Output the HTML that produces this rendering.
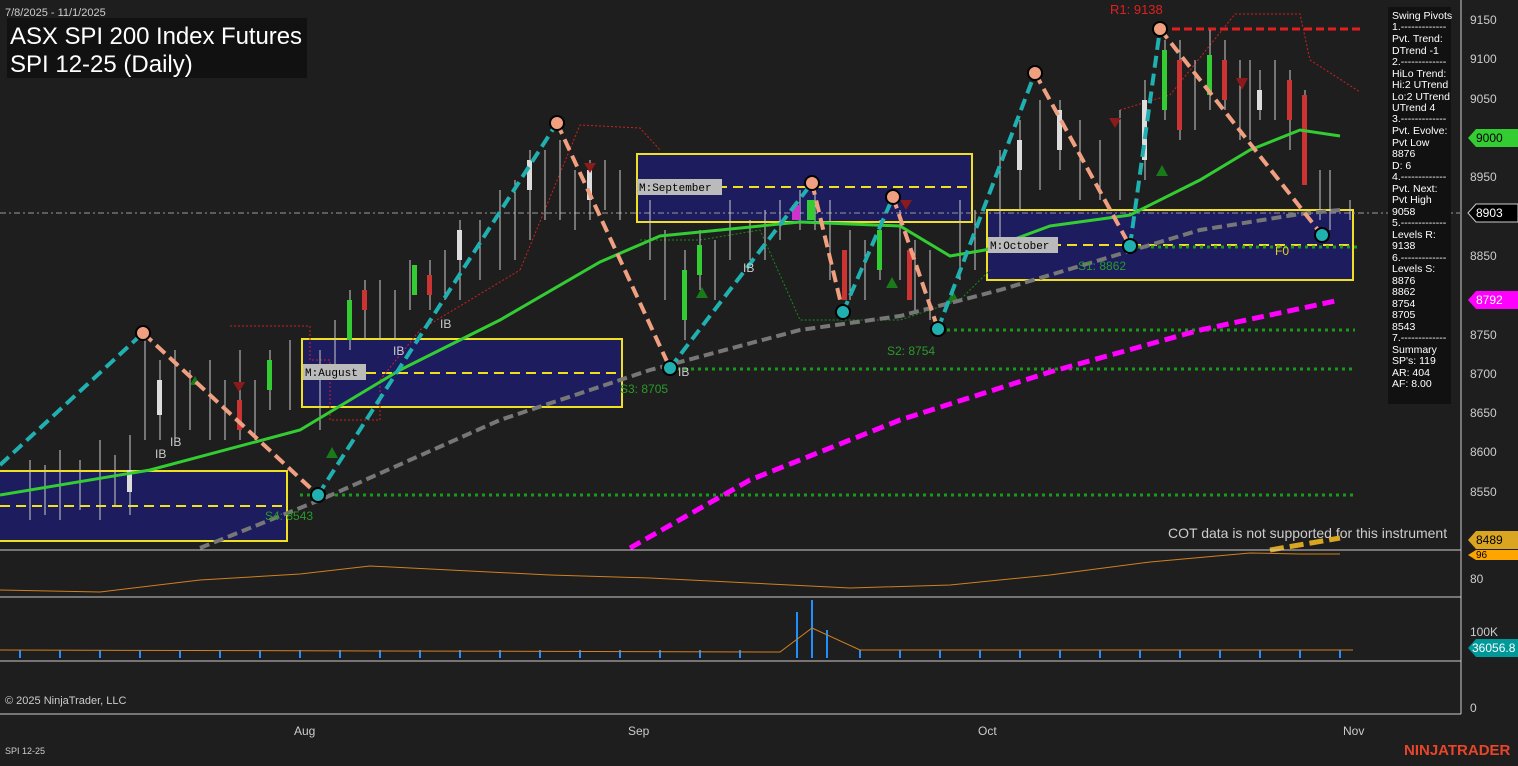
<!DOCTYPE html><html><head><style>
body{margin:0;background:#1e1e1e;width:1518px;height:761px;overflow:hidden;font-family:"Liberation Sans",sans-serif}
</style></head><body>
<svg width="1518" height="761" xmlns="http://www.w3.org/2000/svg" font-family="Liberation Sans, sans-serif">
<rect width="1518" height="761" fill="#1e1e1e"/>
<g fill="#1c1c5e" stroke="#f0e020" stroke-width="2">
<rect x="-2" y="471" width="289" height="70"/>
<rect x="302" y="339" width="320" height="68"/>
<rect x="637" y="154" width="335" height="68"/>
<rect x="987" y="210" width="366" height="70"/>
</g>
<g stroke="#f0e020" stroke-width="2" stroke-dasharray="10,6">
<line x1="0" y1="506" x2="287" y2="506"/><line x1="302" y1="373" x2="622" y2="373"/>
<line x1="637" y1="187" x2="972" y2="187"/><line x1="987" y1="245" x2="1353" y2="245"/>
</g>
<line x1="0" y1="213" x2="1460" y2="213" stroke="#999" stroke-dasharray="6,3,2,3"/>
<g stroke="#1a9a1a" stroke-width="3" stroke-dasharray="3,4">
<line x1="300" y1="495" x2="1355" y2="495"/><line x1="670" y1="369" x2="1355" y2="369"/>
<line x1="940" y1="330" x2="1355" y2="330"/><line x1="1130" y1="247" x2="1360" y2="247"/>
</g>
<line x1="1160" y1="29" x2="1360" y2="29" stroke="#e02020" stroke-width="3" stroke-dasharray="8,4"/>
<polyline points="520,270 580,125 640,128 660,150" fill="none" stroke="#d02020" stroke-dasharray="2,2"/>
<polyline points="1120,110 1170,95 1235,14 1300,14 1310,60 1360,92" fill="none" stroke="#d02020" stroke-dasharray="2,2"/>
<polyline points="230,326 310,326 310,360 330,360 330,420 380,420 380,380 420,330 470,300 520,270" fill="none" stroke="#d02020" stroke-dasharray="2,2"/>
<polyline points="640,240 700,240 760,230 800,320 900,320 960,300 990,270" fill="none" stroke="#1a8a1a" stroke-dasharray="2,2"/>
<g stroke="#ccc" stroke-width="1">
<path d="M30,460v60M45,465v50M60,450v70M80,460v50M100,440v80M115,455v50M130,435v80M145,330v110M160,360v80M175,350v90M190,370v60M210,360v80M225,380v60M240,350v90M255,380v60M270,350v60M290,340v70M320,350v80M335,320v60M350,290v60M365,280v60M380,280v60M395,290v50M410,260v50M430,260v50M445,250v50M460,220v80M480,220v60M500,190v80M515,180v80M530,150v90M545,150v70M560,140v80M575,170v60M590,160v60M605,160v50M620,170v50M650,200v60M665,230v70M685,250v90M700,230v60M715,240v60M730,200v60M750,220v40M765,210v50M780,200v40M800,190v40M815,190v40M830,200v80M850,230v70M865,240v60M880,220v60M900,210v70M915,240v70M930,250v70M960,200v80M975,210v60M1000,150v90M1020,120v90M1040,100v90M1060,100v70M1080,120v80M1100,140v60M1120,110v90M1145,80v100M1165,40v80M1180,40v100M1195,60v70M1210,30v80M1225,40v70M1240,60v80M1250,60v80M1260,70v50M1275,60v60M1290,70v80M1305,90v60M1320,170v50M1330,170v60M1350,200v20"/>
</g>
<g stroke="none">
<rect x="127" y="470" width="5" height="22" fill="#ddd"/><rect x="157" y="380" width="5" height="35" fill="#ddd"/><rect x="237" y="400" width="5" height="30" fill="#c33"/>
<rect x="267" y="360" width="5" height="30" fill="#3c3"/><rect x="347" y="300" width="5" height="40" fill="#3c3"/><rect x="362" y="290" width="5" height="20" fill="#c33"/>
<rect x="412" y="265" width="5" height="30" fill="#3c3"/><rect x="427" y="275" width="5" height="20" fill="#c33"/><rect x="457" y="230" width="5" height="30" fill="#ddd"/>
<rect x="527" y="160" width="5" height="30" fill="#ddd"/><rect x="587" y="170" width="5" height="30" fill="#ddd"/><rect x="682" y="270" width="5" height="50" fill="#3c3"/>
<rect x="697" y="245" width="5" height="30" fill="#3c3"/><rect x="792" y="205" width="8" height="15" fill="#c3c"/><rect x="807" y="200" width="8" height="20" fill="#3c3"/>
<rect x="842" y="250" width="5" height="50" fill="#c33"/><rect x="877" y="230" width="5" height="40" fill="#3c3"/><rect x="907" y="250" width="5" height="50" fill="#c33"/>
<rect x="1017" y="140" width="5" height="30" fill="#ddd"/><rect x="1057" y="110" width="5" height="40" fill="#ddd"/><rect x="1142" y="100" width="5" height="60" fill="#ddd"/>
<rect x="1162" y="50" width="5" height="60" fill="#3c3"/><rect x="1177" y="60" width="5" height="70" fill="#c33"/><rect x="1207" y="55" width="5" height="40" fill="#3c3"/>
<rect x="1222" y="60" width="5" height="40" fill="#c33"/><rect x="1257" y="90" width="5" height="20" fill="#ddd"/><rect x="1287" y="80" width="5" height="40" fill="#c33"/><rect x="1302" y="95" width="5" height="90" fill="#c33"/>
</g>
<g fill="#1a7a1a"><path d="M190,385l5,-9l5,9z M326,458l6,-11l6,11z M696,298l6,-11l6,11z M886,288l6,-11l6,11z M947,302l6,-11l6,11z M1156,176l6,-11l6,11z"/></g>
<g fill="#8b1a1a"><path d="M233,382l6,10l6,-10z M584,163l6,10l6,-10z M1109,118l6,10l6,-10z M1236,78l6,12l6,-12z M900,200l6,10l6,-10z"/></g>
<polyline points="0,495 150,470 300,430 400,370 500,320 600,262 660,236 800,222 900,226 950,256 985,250 1050,226 1130,215 1200,180 1250,150 1300,130 1340,136" fill="none" stroke="#3c3" stroke-width="3"/>
<polyline points="200,548 320,500 500,420 650,370 800,330 900,316 1000,290 1100,260 1200,230 1300,214 1340,210" fill="none" stroke="#777" stroke-width="4" stroke-dasharray="10,5"/>
<polyline points="630,548 750,480 900,420 1050,372 1200,330 1340,300" fill="none" stroke="#f0f" stroke-width="5" stroke-dasharray="12,6"/>
<g stroke-width="4" stroke-dasharray="12,6" fill="none">
<polyline points="0,465 143,333" stroke="#20b0b0"/><polyline points="143,333 318,495" stroke="#f0a080"/>
<polyline points="318,495 557,123" stroke="#20b0b0"/><polyline points="557,123 670,368" stroke="#f0a080"/>
<polyline points="670,368 812,183" stroke="#20b0b0"/><polyline points="812,183 843,312" stroke="#f0a080"/>
<polyline points="843,312 893,197" stroke="#20b0b0"/><polyline points="893,197 938,329" stroke="#f0a080"/>
<polyline points="938,329 1035,73" stroke="#20b0b0"/><polyline points="1035,73 1130,246" stroke="#f0a080"/>
<polyline points="1130,246 1160,29" stroke="#20b0b0"/><polyline points="1160,29 1322,235" stroke="#f0a080"/>
</g>
<g fill="#f0a080" stroke="#000" stroke-width="2">
<circle cx="143" cy="333" r="7"/><circle cx="557" cy="123" r="7"/><circle cx="812" cy="183" r="7"/><circle cx="893" cy="197" r="7"/><circle cx="1035" cy="73" r="7"/><circle cx="1160" cy="29" r="7"/></g>
<g fill="#20b0b0" stroke="#000" stroke-width="2">
<circle cx="318" cy="495" r="7"/><circle cx="670" cy="368" r="7"/><circle cx="843" cy="312" r="7"/><circle cx="938" cy="329" r="7"/><circle cx="1130" cy="246" r="7"/><circle cx="1322" cy="235" r="7"/></g>
<g font-size="12" fill="#2a9a2a"><text x="265" y="520">S4: 8543</text><text x="620" y="393">S3: 8705</text><text x="887" y="355">S2: 8754</text><text x="1078" y="270">S1: 8862</text></g>
<text x="1110" y="14" font-size="13" fill="#e02020">R1: 9138</text>
<g font-size="12" fill="#ccc"><text x="155" y="458">IB</text><text x="170" y="446">IB</text><text x="393" y="355">IB</text><text x="440" y="328">IB</text><text x="678" y="376">IB</text><text x="743" y="272">IB</text><text x="1275" y="255" fill="#e0d020">F0</text></g>
<g font-size="11" fill="#000" font-family="Liberation Mono,monospace">
<rect x="303" y="364" width="63" height="16" fill="#bbb"/><text x="305" y="376">M:August</text>
<rect x="637" y="179" width="85" height="16" fill="#bbb"/><text x="639" y="191">M:September</text>
<rect x="988" y="237" width="70" height="16" fill="#bbb"/><text x="990" y="249">M:October</text>
</g>
<text x="1168" y="538" font-size="14" fill="#ccc">COT data is not supported for this instrument</text>
<polyline points="1270,550 1340,538" stroke="#daa520" stroke-width="5" stroke-dasharray="14,6"/>
<text x="5" y="16" font-size="11" fill="#ccc">7/8/2025 - 11/1/2025</text>
<rect x="7" y="18" width="300" height="60" fill="#111"/>
<text x="10" y="44" font-size="24" fill="#fff" textLength="292">ASX SPI 200 Index Futures</text>
<text x="10" y="72" font-size="24" fill="#fff">SPI 12-25 (Daily)</text>
<rect x="1388" y="7" width="63" height="397" fill="#111"/>
<g font-size="10.5" fill="#fff">
<text x="1392" y="19">Swing Pivots</text><text x="1392" y="30">1.-------------</text><text x="1392" y="42">Pvt. Trend:</text><text x="1392" y="54">DTrend -1</text><text x="1392" y="65">2.-------------</text><text x="1392" y="77">HiLo Trend:</text><text x="1392" y="88">Hi:2 UTrend</text><text x="1392" y="100">Lo:2 UTrend</text><text x="1392" y="111">UTrend 4</text><text x="1392" y="122">3.-------------</text><text x="1392" y="134">Pvt. Evolve:</text><text x="1392" y="146">Pvt Low</text><text x="1392" y="157">8876</text><text x="1392" y="169">D: 6</text><text x="1392" y="180">4.-------------</text><text x="1392" y="192">Pvt. Next:</text><text x="1392" y="203">Pvt High</text><text x="1392" y="215">9058</text><text x="1392" y="226">5.-------------</text><text x="1392" y="238">Levels R:</text><text x="1392" y="249">9138</text><text x="1392" y="261">6.-------------</text><text x="1392" y="272">Levels S:</text><text x="1392" y="284">8876</text><text x="1392" y="295">8862</text><text x="1392" y="307">8754</text><text x="1392" y="318">8705</text><text x="1392" y="330">8543</text><text x="1392" y="341">7.-------------</text><text x="1392" y="353">Summary</text><text x="1392" y="364">SP's: 119</text><text x="1392" y="376">AR: 404</text><text x="1392" y="387">AF: 8.00</text>
</g>
<line x1="1461" y1="0" x2="1461" y2="714" stroke="#ccc"/>
<g stroke="#ccc"><line x1="0" y1="550" x2="1461" y2="550"/><line x1="0" y1="597" x2="1461" y2="597"/><line x1="0" y1="661" x2="1461" y2="661"/><line x1="0" y1="714" x2="1461" y2="714"/></g>
<g font-size="12" fill="#ccc">
<text x="1470" y="24">9150</text><text x="1470" y="63">9100</text><text x="1470" y="103">9050</text><text x="1470" y="181">8950</text><text x="1470" y="260">8850</text><text x="1470" y="339">8750</text><text x="1470" y="378">8700</text><text x="1470" y="417">8650</text><text x="1470" y="456">8600</text><text x="1470" y="496">8550</text>
<text x="1470" y="583">80</text><text x="1470" y="636">100K</text><text x="1470" y="712">0</text>
<text x="294" y="735">Aug</text><text x="628" y="735">Sep</text><text x="978" y="735">Oct</text><text x="1343" y="735">Nov</text>
<text x="5" y="704" font-size="11">© 2025 NinjaTrader, LLC</text></g>
<text x="5" y="754" font-size="9" fill="#ccc">SPI 12-25</text>
<text x="1404" y="755" font-size="15" font-weight="bold" fill="#e8452a">NINJATRADER</text>
<g font-size="12">
<path d="M1468,138l8,-9h42v18h-42z" fill="#3c3"/><text x="1476" y="142" fill="#000">9000</text>
<path d="M1468,213l8,-9h42v18h-42z" fill="#000" stroke="#ccc"/><text x="1476" y="217" fill="#fff">8903</text>
<path d="M1468,300l8,-9h42v18h-42z" fill="#f0f"/><text x="1476" y="304" fill="#fff">8792</text>
<path d="M1468,540l8,-9h42v18h-42z" fill="#daa520"/><text x="1476" y="544" fill="#000">8489</text>
<path d="M1468,555l8,-5h42v10h-42z" fill="#ffa500"/><text x="1476" y="558" fill="#000" font-size="10">96</text>
<path d="M1468,648l8,-9h42v18h-42z" fill="#00999a"/><text x="1472" y="652" fill="#fff">36056.8</text>
</g>
<polyline points="0,590 100,592 200,580 300,574 370,566 450,570 550,575 650,578 750,583 850,588 950,585 1050,575 1150,562 1250,553 1300,554 1340,554" fill="none" stroke="#d08020"/>
<g stroke="#1e90ff" stroke-width="2"><path d="M20,650v8M60,650v8M100,650v8M140,650v8M180,650v8M220,650v8M260,650v8M300,650v8M340,650v8M380,650v8M420,650v8M460,650v8M500,650v8M540,650v8M580,650v8M620,650v8M660,650v8M700,650v8M740,650v8M797,612v46M812,600v58M827,630v28M860,650v8M900,650v8M940,650v8M980,650v8M1020,650v8M1060,650v8M1100,650v8M1140,650v8M1180,650v8M1220,650v8M1260,650v8M1300,650v8M1340,650v8"/></g>
<polyline points="0,650 780,652 812,628 860,650 1353,650" fill="none" stroke="#d08020"/>
</svg>
</body></html>
